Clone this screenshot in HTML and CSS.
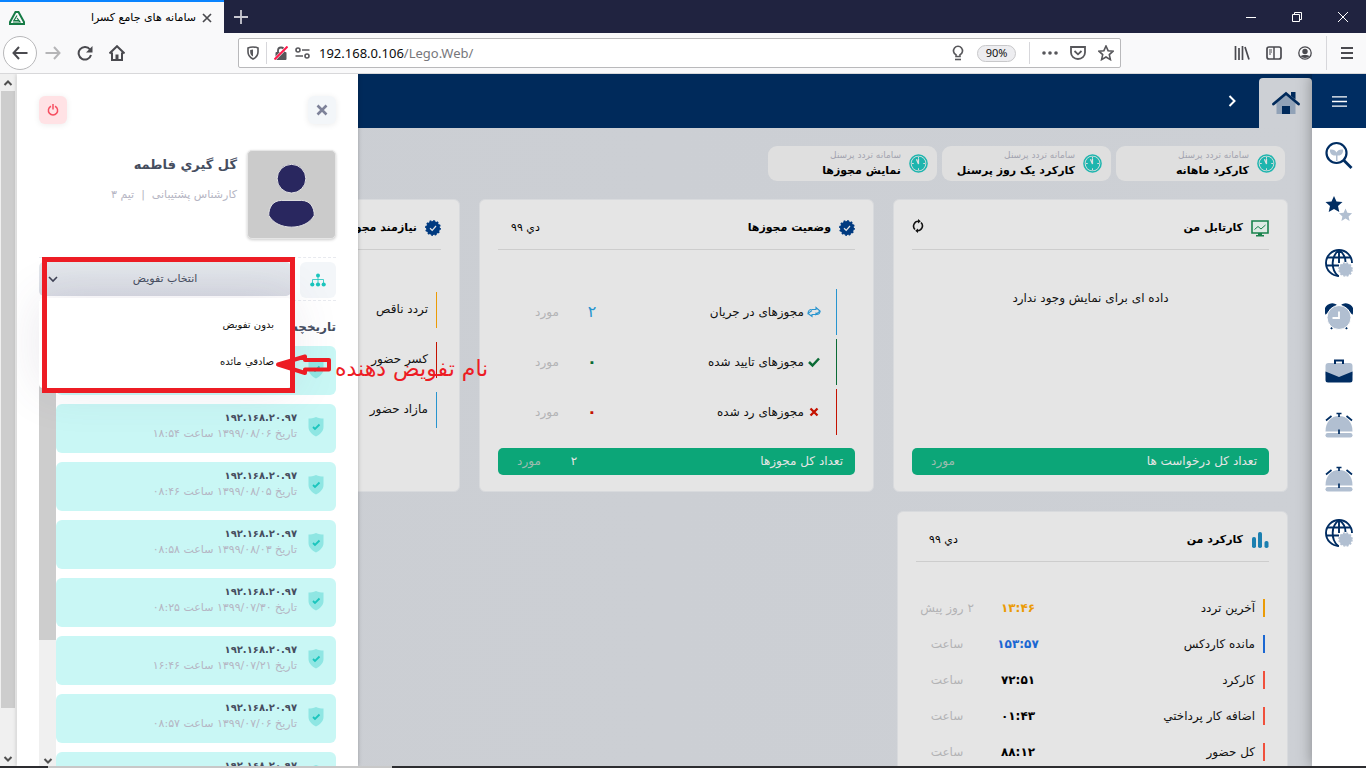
FILE: index.html
```html
<!DOCTYPE html>
<html lang="fa">
<head>
<meta charset="utf-8">
<title>سامانه های جامع کسرا</title>
<link rel="stylesheet" href="styles.css">
</head>
<body>
<svg class="defs" aria-hidden="true">
  <symbol id="clock" viewBox="0 0 20 20"><circle cx="10" cy="10" r="9" fill="none" stroke="#1db5ae" stroke-width="1.6"/><circle cx="10" cy="10" r="7.300" fill="#1db5ae"/><path d="M10 3v2M10 15v2M3 10h2M15 10h2" stroke="#dfdfdf" stroke-width="1"/><path d="M7.8 5.5 10 10.5V5.2" fill="none" stroke="#dfdfdf" stroke-width="1.3"/></symbol>
  <symbol id="badge" viewBox="0 0 16 16"><circle cx="8" cy="8" r="7" fill="#003a80" /><circle cx="8" cy="8" r="7" fill="none" stroke="#003a80" stroke-width="1.8" stroke-dasharray="1.83 1.83"/><path d="m5 8.3 2.2 2L11 6" fill="none" stroke="#e5e5e5" stroke-width="1.2"/></symbol>
  <symbol id="shield" viewBox="0 0 16 20"><path d="M8 0C5.500 1.200 2.500 1.600.5 1.600V10c0 4.500 4 7.800 7.500 9.500 3.500-1.700 7.500-5 7.500-9.500V1.600C13.500 1.600 10.500 1.200 8 0z" fill="#8fe6e3"/><path d="m5 10 2 2 4.500-4.500" fill="none" stroke="#1bc5bd" stroke-width="1.800"/></symbol>
  <symbol id="globe" viewBox="0 0 28 28"><g fill="none" stroke="#002d62" stroke-width="1.900"><path d="M14 27A13 13 0 1 1 27 14"/><path d="M14 1v13M14 1C6 7 5.500 20 13 27M14 1c4.500 3 6.500 7 6.500 12M2.500 8.500h23M1 16.500h13"/></g><circle cx="20.500" cy="20.500" r="6.300" fill="#b1bfd1"/><circle cx="20.500" cy="20.500" r="6.500" fill="none" stroke="#b1bfd1" stroke-width="1.500" stroke-dasharray="2 1.400"/></symbol>
  <symbol id="bell" viewBox="0 0 28 28"><path d="M.5 20.500C.5 11 6 5 14 5s13.500 6 13.500 15.500z" fill="#b1bfd1"/><rect x=".5" y="22" width="27" height="4.500" rx="2.200" fill="#b1bfd1"/><path d="M11.500 2.500h5M14 3v3M14 18.500v4.500M1 9.500 6.500 5M27 9.500 21.500 5" stroke="#002d62" stroke-width="1.700"/></symbol>
  <symbol id="up" viewBox="0 0 10 10"><path d="m1.500 7 3.500-3.500L8.500 7" fill="none" stroke="#505050" stroke-width="2"/></symbol>
  <symbol id="down" viewBox="0 0 10 10"><path d="M1.500 3 5 6.500 8.500 3" fill="none" stroke="#505050" stroke-width="2"/></symbol>
</svg>

<header class="browser">
  <div class="tabs">
    <div class="tab">
      <svg width="16" height="14" viewBox="0 0 16 14"><path d="M6.500 1h3L15 11v2H1v-2z" fill="none" stroke="#167b45" stroke-width="2"/><path d="M8 4.500 5 9.500h5.500M8 7l3 4H4" fill="none" stroke="#167b45" stroke-width="1.200"/></svg>
      <span class="tab-title" dir="rtl">سامانه های جامع کسرا</span>
      <button class="plain" aria-label="Close tab"><svg width="10" height="10" viewBox="0 0 10 10"><path d="m1 1 8 8M9 1 1 9" stroke="#4a4a4f" stroke-width="1.700"/></svg></button>
    </div>
    <button class="plain newtab" aria-label="New tab"><svg width="14" height="14" viewBox="0 0 14 14"><path d="M7 0v14M0 7h14" stroke="#c9c9d2" stroke-width="1.800"/></svg></button>
    <div class="window-buttons">
      <button class="plain" aria-label="Minimize"><svg width="10" height="10" viewBox="0 0 10 10"><path d="M0 5.500h10" stroke="#fff"/></svg></button>
      <button class="plain" aria-label="Restore"><svg width="10" height="10" viewBox="0 0 10 10"><path d="M.5 2.500h7v7h-7zM2.500 2V.5h7v7H8" fill="none" stroke="#fff"/></svg></button>
      <button class="plain" aria-label="Close"><svg width="10" height="10" viewBox="0 0 10 10"><path d="m0 0 10 10M10 0 0 10" stroke="#fff"/></svg></button>
    </div>
  </div>
  <div class="toolbar">
    <nav class="nav-buttons">
      <button class="plain back" aria-label="Back"><svg width="16" height="14" viewBox="0 0 16 14"><path d="M15.500 7H1.500M7 1 1.500 7 7 13" fill="none" stroke="#4a4a4f" stroke-width="2"/></svg></button>
      <button class="plain" aria-label="Forward"><svg width="16" height="14" viewBox="0 0 16 14"><path d="M.5 7h14M9 1l5.500 6L9 13" fill="none" stroke="#b5b5b7" stroke-width="2"/></svg></button>
      <button class="plain" aria-label="Reload"><svg width="16" height="16" viewBox="0 0 16 16"><path d="M13 4.500A6.300 6.300 0 1 0 14 10" fill="none" stroke="#4a4a4f" stroke-width="2"/><path d="M15.500 1v6.500H9z" fill="#4a4a4f"/></svg></button>
      <button class="plain" aria-label="Home"><svg width="16" height="16" viewBox="0 0 16 16"><path d="M0.500 8.500 8 1.200l7.500 7.300M3 7.500V15h10V7.500" fill="none" stroke="#4a4a4f" stroke-width="2"/><path d="M6.500 15V9.500h3V15z" fill="#4a4a4f"/></svg></button>
    </nav>
    <div class="urlbar">
      <svg width="12" height="14" viewBox="0 0 12 14"><path d="M6 1c2 0 3.500.3 5 1v4c0 3.500-2 5.500-5 7-3-1.500-5-3.500-5-7V2c1.500-.7 3-1 5-1z" fill="none" stroke="#57575b" stroke-width="1.600"/><path d="M6 3.500c-1 0-2 .2-2.800.5v2c0 2.200 1 3.500 2.800 4.500z" fill="#57575b"/></svg>
      <span class="rule"></span>
      <svg width="14" height="14" viewBox="0 0 14 14"><path d="M4 6V4.500a3 3 0 0 1 6 0V6" fill="none" stroke="#57575b" stroke-width="1.800"/><rect x="1.500" y="6" width="11" height="8" rx="1" fill="#57575b"/><path d="M.5 13.500 13.500.5" stroke="#fff" stroke-width="3"/><path d="M.5 13.500 13.500.5" stroke="#ff1a4b" stroke-width="2"/></svg>
      <svg width="15" height="12" viewBox="0 0 15 12"><g fill="none" stroke="#57575b" stroke-width="1.600"><circle cx="3" cy="3" r="2"/><circle cx="12" cy="9" r="2"/><path d="M7 3h7.500M.5 9H8"/></g></svg>
      <input class="url" aria-label="Address" value="192.168.0.106/Lego.Web/">
      <span class="url-face" aria-hidden="true"><b>192.168.0.106</b>/Lego.Web/</span>
      <svg width="12" height="16" viewBox="0 0 12 16"><path d="M4 11.500V9.800A4.500 4.500 0 1 1 8 9.800v1.700z" fill="none" stroke="#57575b" stroke-width="1.600"/><path d="M3 14.500h6" stroke="#57575b" stroke-width="1.600"/></svg>
      <button class="zoom">90%</button>
      <span class="rule"></span>
      <svg width="16" height="4" viewBox="0 0 16 4" fill="#57575b"><circle cx="2" cy="2" r="1.800"/><circle cx="8" cy="2" r="1.800"/><circle cx="14" cy="2" r="1.800"/></svg>
      <svg width="16" height="14" viewBox="0 0 16 14"><path d="M1 1h14v5.500a7 6.500 0 0 1-14 0z" fill="none" stroke="#57575b" stroke-width="1.800"/><path d="m4.500 5 3.500 3.300L11.500 5" fill="none" stroke="#57575b" stroke-width="1.800"/></svg>
      <svg width="16" height="16" viewBox="0 0 16 16"><path d="m8 1 2.100 4.700 5 .5-3.800 3.400 1.100 5L8 12l-4.400 2.600 1.100-5L.9 6.200l5-.5z" fill="none" stroke="#57575b" stroke-width="1.600"/></svg>
    </div>
    <div class="tools">
      <svg width="16" height="14" viewBox="0 0 16 14"><path d="M1.500 0v14M5 2v12M8.500 0v14M11 1l4 12.500" stroke="#4a4a4f" stroke-width="1.700"/></svg>
      <svg width="16" height="14" viewBox="0 0 16 14"><rect x="1" y="1" width="14" height="12" rx="2" fill="none" stroke="#4a4a4f" stroke-width="1.700"/><path d="M8 1v12" stroke="#4a4a4f" stroke-width="1.500"/><path d="M3 4h3M3 6h3M3 8h2" stroke="#4a4a4f"/></svg>
      <svg width="14" height="14" viewBox="0 0 14 14"><circle cx="7" cy="7" r="6.200" fill="none" stroke="#4a4a4f" stroke-width="1.300"/><circle cx="7" cy="5.500" r="2.700" fill="#4a4a4f"/><path d="M2.500 10c1.500-1.500 7.500-1.500 9 0-1.500 2.500-7.500 2.500-9 0z" fill="#4a4a4f"/></svg>
      <span class="rule"></span>
      <svg width="12" height="12" viewBox="0 0 12 12"><path d="M0 1h12M0 6h12M0 11h12" stroke="#4a4a4f" stroke-width="2"/></svg>
    </div>
  </div>
</header>

<div class="page">
  <div class="scrollbar">
    <svg width="10" height="10"><use href="#up"/></svg>
    <div class="thumb"></div>
    <svg width="10" height="10"><use href="#down"/></svg>
  </div>

  <div class="main" dir="rtl">
    <div class="topbar">
      <a class="home" href="#" aria-label="خانه"><svg width="28" height="24" viewBox="0 0 28 24"><path d="M4.500 12 14 4l9.500 8v11h-19z" fill="#91a2b7"/><path d="M10 15h8v8h-8z" fill="#002a5b"/><path d="M1.500 13 14 2.500 26.500 13" fill="none" stroke="#002a5b" stroke-width="2.800" stroke-linecap="round"/><path d="M19 1h4.500v7.500L19 5z" fill="#002a5b"/></svg></a>
      <button class="plain" aria-label="بعدی"><svg width="8" height="12" viewBox="0 0 8 12"><path d="m1.500 1 5 5-5 5" fill="none" stroke="#fff" stroke-width="2"/></svg></button>
    </div>
    <div class="content">
      <div class="shortcuts">
        <a class="shortcut" href="#"><svg width="19" height="19"><use href="#clock"/></svg><span><small>سامانه تردد پرسنل</small><b>کارکرد ماهانه</b></span></a>
        <a class="shortcut" href="#"><svg width="19" height="19"><use href="#clock"/></svg><span><small>سامانه تردد پرسنل</small><b>کارکرد یک روز پرسنل</b></span></a>
        <a class="shortcut" href="#"><svg width="19" height="19"><use href="#clock"/></svg><span><small>سامانه تردد پرسنل</small><b>نمایش مجوزها</b></span></a>
      </div>
      <div class="cards">
        <section class="card">
          <header class="card-head">
            <svg width="18" height="18" viewBox="0 0 18 18"><path d="M1 2h16v12H1z" fill="#dfeae4" stroke="#19834c" stroke-width="1.600"/><path d="M7 14h4v2h2v1.500H5V16h2z" fill="#19834c"/><path d="m3.500 10.500 3.500-3 3 2.500 4.500-4" fill="none" stroke="#19834c"/></svg>
            <h2>کارتابل من</h2>
            <button class="plain refresh" aria-label="بازخوانی"><svg width="12" height="14" viewBox="0 0 12 14"><path d="M3 10.500A4.800 4.800 0 0 1 6.500 2.300M9 3.500a4.800 4.800 0 0 1-3.500 8.200" fill="none" stroke="#111" stroke-width="1.600"/><path d="M6 0v4.600l2.800-2.300zM6 9.400V14l-2.800-2.300z" fill="#111"/></svg></button>
          </header>
          <p class="empty">داده ای برای نمایش وجود ندارد</p>
          <footer class="total"><span>تعداد کل درخواست ها</span><span></span><span class="unit">مورد</span></footer>
        </section>

        <section class="card">
          <header class="card-head"><svg width="16" height="16"><use href="#badge"/></svg><h2>وضعیت مجوزها</h2><span class="date">دي ۹۹</span></header>
          <ul class="status">
            <li class="sky"><svg width="14" height="12" viewBox="0 0 14 12"><path d="M4.500 3.500H9v-2L13 5 9 8.500v-2" fill="none" stroke="#2794cf" stroke-width="1.100"/><path d="M4.500 3.500C2.500 3.500 1 5 1 7.500l4-3M9.500 8.500H5v2L1 7.500M9.500 8.500C11.500 8.500 13 7 13 5" fill="none" stroke="#2794cf" stroke-width="1.100"/></svg><span>مجوزهای در جریان</span><b class="big">۲</b><span class="unit">مورد</span></li>
            <li class="green"><svg width="14" height="12" viewBox="0 0 14 12"><path d="m2 6 3.500 3.500L12 2.500" fill="none" stroke="#0b6b35" stroke-width="2.500"/></svg><span>مجوزهای تایید شده</span><b>۰</b><span class="unit">مورد</span></li>
            <li class="red"><svg width="14" height="12" viewBox="0 0 14 12"><path d="m3.500 2.500 7 7M10.500 2.500l-7 7" stroke="#c41200" stroke-width="2.300"/></svg><span>مجوزهای رد شده</span><b>۰</b><span class="unit">مورد</span></li>
          </ul>
          <footer class="total"><span>تعداد کل مجوزها</span><span>۲</span><span class="unit">مورد</span></footer>
        </section>

        <section class="card">
          <header class="card-head"><svg width="16" height="16"><use href="#badge"/></svg><h2>نیازمند مجوزها</h2></header>
          <ul class="needs">
            <li class="amber">تردد ناقص</li>
            <li class="red">کسر حضور</li>
            <li class="sky">مازاد حضور</li>
          </ul>
        </section>

        <section class="card work-card">
          <header class="card-head">
            <svg width="18" height="16" viewBox="0 0 18 16" fill="#1b7fb0"><rect x="1" y="5" width="4" height="11" rx="1.800"/><rect x="7" y="0" width="4" height="16" rx="1.800"/><rect x="13.500" y="9" width="4" height="7" rx="1.800"/></svg>
            <h2>کارکرد من</h2><span class="date">دي ۹۹</span>
          </header>
          <ul class="work">
            <li class="amber"><span>آخرین تردد</span><b>۱۳:۴۶</b><span class="unit">۲ روز پیش</span></li>
            <li class="blue"><span>مانده کاردکس</span><b>۱۵۳:۵۷</b><span class="unit">ساعت</span></li>
            <li><span>کارکرد</span><b>۷۲:۵۱</b><span class="unit">ساعت</span></li>
            <li><span>اضافه کار پرداختي</span><b>۰۱:۴۳</b><span class="unit">ساعت</span></li>
            <li><span>کل حضور</span><b>۸۸:۱۲</b><span class="unit">ساعت</span></li>
          </ul>
        </section>
      </div>
    </div>
  </div>

  <nav class="side">
    <button class="plain menu" aria-label="منو"><svg width="15" height="11" viewBox="0 0 15 11"><path d="M0 .8h15M0 5.500h15M0 10.200h15" stroke="#fff" stroke-width="1.300"/></svg></button>
    <a href="#" aria-label="جستجو"><svg width="28" height="28" viewBox="0 0 28 28"><circle cx="11.500" cy="12" r="10" fill="none" stroke="#002d62" stroke-width="2.200"/><path d="m18.500 19 8 8" stroke="#002d62" stroke-width="2.800"/><path d="M11 20v-5.500C6.500 15 4.500 12 5 8.500c3-.5 5.500.5 6.500 3 1-2.500 3.500-3.500 6.500-3 .5 3.500-1.500 6.500-5.500 6V20z" fill="#b1bfd1"/></svg></a>
    <a href="#" aria-label="علاقه مندی"><svg width="28" height="28" viewBox="0 0 28 28"><path d="m9 1 2.500 5.500 6 .6-4.500 4 1.300 6L9 14l-5.300 3 1.300-6-4.500-4 6-.6z" fill="#002d62"/><path d="m20.500 13.500 1.900 4.300 4.700.4-3.500 3.200 1 4.600-4.100-2.400-4.100 2.400 1-4.600-3.500-3.200 4.700-.4z" fill="#b1bfd1"/></svg></a>
    <a href="#" aria-label="وب"><svg width="28" height="28"><use href="#globe"/></svg></a>
    <a href="#" aria-label="ساعت"><svg width="28" height="28" viewBox="0 0 28 28"><path d="M1 10C-1 3 6 0 10 2zM27 10c2-7-5-10-9-8zM6 26l3-4M22 26l-3-4" fill="#002d62" stroke="#002d62" stroke-width="2"/><circle cx="14" cy="14.500" r="12" fill="#b1bfd1" stroke="#fff"/><path d="M14 8.500V15H7.500" fill="none" stroke="#fff" stroke-width="1.800"/></svg></a>
    <a href="#" aria-label="کیف"><svg width="28" height="28" viewBox="0 0 28 28"><rect x=".5" y="6" width="27" height="14" rx="3" fill="#b1bfd1"/><path d="M.5 14.500 14 20l13.500-5.500V23a2.500 2.500 0 0 1-2.500 2.500H3A2.500 2.500 0 0 1 .5 23z" fill="#002d62"/><path d="M10 7V3.500h8V7" fill="none" stroke="#002d62" stroke-width="2"/></svg></a>
    <a href="#" aria-label="زنگ"><svg width="28" height="28"><use href="#bell"/></svg></a>
    <a href="#" aria-label="زنگ دوم"><svg width="28" height="28"><use href="#bell"/></svg></a>
    <a href="#" aria-label="شبکه"><svg width="28" height="28"><use href="#globe"/></svg></a>
  </nav>

  <aside class="drawer" dir="rtl">
    <div class="drawer-top">
      <button class="close" aria-label="بستن"><svg width="12" height="12" viewBox="0 0 12 12"><path d="m1.500 1.500 9 9M10.500 1.500l-9 9" stroke="#7e8299" stroke-width="2.600"/></svg></button>
      <button class="power" aria-label="خروج"><svg width="12" height="12" viewBox="0 0 12 12"><path d="M4 2.200a4.600 4.600 0 1 0 4 0" fill="none" stroke="#f64e60" stroke-width="1.500"/><path d="M6 0v5.500" stroke="#f64e60" stroke-width="1.500"/></svg></button>
    </div>
    <div class="profile">
      <svg class="avatar" viewBox="0 0 88 88"><circle cx="44" cy="28" r="14.500" fill="#29275f" stroke="#e5e5e5"/><path d="M34 50h20c9 0 13 7 13 15-8 16-38 16-46 0 0-8 4-15 13-15z" fill="#29275f" stroke="#e5e5e5"/></svg>
      <div><h1>گل گيري فاطمه</h1><p>کارشناس پشتیبانی &nbsp;|&nbsp; تیم ۳</p></div>
    </div>
    <div class="delegate">
      <span class="org"><svg width="16" height="14" viewBox="0 0 16 14"><g fill="#1bc5bd"><circle cx="8" cy="2.500" r="2"/><circle cx="2.300" cy="11.500" r="2.100"/><circle cx="8" cy="11.500" r="2.100"/><circle cx="13.700" cy="11.500" r="2.100"/></g><path d="M8 3v8M2.500 11V6.500h11V11" fill="none" stroke="#1bc5bd" stroke-width=".8"/></svg></span>
      <div class="picker">
        <select aria-label="انتخاب تفویض"><option>انتخاب تفویض</option><option>بدون تفویض</option><option>صادقي مائده</option></select>
        <svg class="chevron" width="10" height="10" viewBox="0 0 10 10"><path d="M1 3l4 4 4-4" fill="none" stroke="#3f4254" stroke-width="1.600"/></svg>
        <div class="menu-list"><button>بدون تفویض</button><button>صادقي مائده</button></div>
      </div>
    </div>
    <h2 class="history-title">تاریخچه</h2>
    <div class="history">
      <ul>
        <li><svg width="16" height="20"><use href="#shield"/></svg></li>
        <li><svg width="16" height="20"><use href="#shield"/></svg><span><b>۱۹۲.۱۶۸.۲۰.۹۷</b><small>تاریخ ۱۳۹۹/۰۸/۰۶ ساعت ۱۸:۵۴</small></span></li>
        <li><svg width="16" height="20"><use href="#shield"/></svg><span><b>۱۹۲.۱۶۸.۲۰.۹۷</b><small>تاریخ ۱۳۹۹/۰۸/۰۵ ساعت ۰۸:۴۶</small></span></li>
        <li><svg width="16" height="20"><use href="#shield"/></svg><span><b>۱۹۲.۱۶۸.۲۰.۹۷</b><small>تاریخ ۱۳۹۹/۰۸/۰۳ ساعت ۰۸:۵۸</small></span></li>
        <li><svg width="16" height="20"><use href="#shield"/></svg><span><b>۱۹۲.۱۶۸.۲۰.۹۷</b><small>تاریخ ۱۳۹۹/۰۷/۳۰ ساعت ۰۸:۲۵</small></span></li>
        <li><svg width="16" height="20"><use href="#shield"/></svg><span><b>۱۹۲.۱۶۸.۲۰.۹۷</b><small>تاریخ ۱۳۹۹/۰۷/۲۱ ساعت ۱۶:۴۶</small></span></li>
        <li><svg width="16" height="20"><use href="#shield"/></svg><span><b>۱۹۲.۱۶۸.۲۰.۹۷</b><small>تاریخ ۱۳۹۹/۰۷/۰۶ ساعت ۰۸:۵۷</small></span></li>
        <li><svg width="16" height="20"><use href="#shield"/></svg><span><b>۱۹۲.۱۶۸.۲۰.۹۷</b></span></li>
      </ul>
      <div class="inner-scroll"><div class="inner-thumb"></div><svg width="10" height="10"><use href="#down"/></svg></div>
    </div>
  </aside>

  <div class="mark-box"></div>
  <div class="mark-label" dir="rtl"><span>نام تفویض دهنده</span></div>
  <svg class="mark-arrow" width="58" height="26" viewBox="0 0 58 26"><path d="m3 12.500 27-8V8h24v9.500H30V21z" fill="none" stroke="#ed1c24" stroke-width="4" stroke-linejoin="round"/><path d="M3 12.500 20 7v3.500l-3 2 3 2V18z" fill="#ed1c24"/></svg>
</div>
<footer class="taskbar"><span></span></footer>
</body>
</html>
```

FILE: styles.css
```css
* { box-sizing: border-box; }
body {
  margin: 0;
  height: 100vh;
  display: flex;
  flex-direction: column;
  overflow: hidden;
  font: 12px/18px "DejaVu Sans", sans-serif;
  color: #111;
}
h1, h2, p, ul { margin: 0; padding: 0; list-style: none; }
a { color: inherit; text-decoration: none; }
svg { display: block; flex: none; }
button, select, input { font: inherit; color: inherit; }
.defs { position: absolute; width: 0; height: 0; }
.plain { border: 0; padding: 0; background: none; display: flex; align-items: center; justify-content: center; }

/* browser frame */
.browser { flex: none; background: #f9f9fa; border-bottom: 1px solid #d8d8da; }
.tabs { display: flex; height: 33px; background: #202340; }
.tab { width: 224px; display: flex; align-items: center; gap: 6px; padding: 0 12px 0 9px; background: #f9f9fa; border-top: 2px solid #0a84ff; }
.tab-title { flex: 1; font-size: 11px; color: #000; }
.newtab { width: 34px; }
.window-buttons { display: flex; margin-left: auto; }
.window-buttons button { width: 46px; }
.toolbar { display: flex; align-items: center; height: 40px; padding: 0 13px 0 3px; }
.nav-buttons { display: flex; align-items: center; width: 235px; gap: 16px; }
.nav-buttons .back { width: 34px; height: 34px; margin-right: -8px; border: 1px solid #b8b8ba; border-radius: 50%; background: #fff; }
.urlbar { flex: 1; position: relative; display: flex; align-items: center; gap: 7px; height: 30px; padding: 0 6px 0 8px; background: #fff; border: 1px solid #b9b9bb; border-radius: 2px; font: 13px/20px "Noto Sans", sans-serif; }
.rule { width: 1px; height: 22px; background: #d7d7db; }
.url { flex: 1; min-width: 0; border: 0; padding: 0; background: none; color: transparent; }
.url-face { position: absolute; left: 80px; color: #77777b; pointer-events: none; }
.url-face b { font-weight: 400; color: #0c0c0d; }
.zoom { width: 39px; height: 17px; margin: 0 6px; padding: 0; border: 1px solid #c8c8ca; border-radius: 9px; background: #ededf0; font-size: 11px; line-height: 14px; }
.urlbar .zoom ~ svg { margin-left: 5px; }
.tools { display: flex; align-items: center; gap: 16px; margin-left: 113px; }
.tools .rule { height: 34px; margin: 0 -2px; }

/* page frame */
.page { flex: 1; min-height: 0; position: relative; display: flex; overflow: hidden; }
.scrollbar { flex: none; width: 17px; display: flex; flex-direction: column; align-items: center; background: #f0f0f0; padding: 4px 1px 2px; border-right: 1px solid #f8f8f8; }
.thumb { flex: none; width: 100%; height: 90%; margin-top: 3px; margin-bottom: auto; background: #cdcdcd; }
.main { flex: 1; min-width: 0; background: linear-gradient(90deg, #cbced3, #cdd0d5); overflow: hidden; }
.topbar { display: flex; align-items: flex-end; height: 54px; background: #002a5b; }
.topbar .plain { width: 54px; height: 54px; }
.home { width: 53px; height: 50px; display: flex; align-items: center; justify-content: center; background: #cdd0d5; border-radius: 4px 4px 0 0; }
.content { padding: 18px 24px 0 48px; }
.shortcuts { display: flex; gap: 5px; margin: 0 3px 18px; }
.shortcut { display: flex; align-items: center; gap: 8px; width: 169px; height: 35px; padding: 0 9px; border-radius: 9px; background: #dfdfdf; color: #000; }
.shortcut span { display: flex; flex-direction: column; white-space: nowrap; }
.shortcut small { font-size: 9px; line-height: 14px; color: #a3a4af; }
.shortcut b { font-size: 11px; line-height: 17px; }
.cards { display: grid; grid-template-columns: repeat(3, 1fr); gap: 19px; }
.card { height: 293px; display: flex; flex-direction: column; padding: 0 18px 16px; border: 1px solid #d8dadd; border-radius: 6px; background: #e5e5e5; }
.card-head { flex: none; display: flex; align-items: center; gap: 8px; height: 50px; padding-top: 7px; border-bottom: 1px solid #cdcdcd; }
.card-head h2 { font-size: 11px; color: #000; }
.date, .refresh { margin-right: auto; }
.date { margin-left: 13px; font-size: 11px; color: #000; }
.refresh svg { margin: -4px 0 0; }
.empty { flex: 1; padding-top: 39px; text-align: center; }
.unit { color: #b3b3b5; text-align: center; }
.total { display: grid; grid-template-columns: 1fr 28px 62px; align-items: center; height: 27px; padding: 0 12px 2px 0; border-radius: 5px; background: #0ca678; color: #e5e5e5; margin-top: auto; }
.total span:nth-child(2) { text-align: center; }
.total .unit { color: #9dbcb0; }
.status { padding-top: 39px; }
.status li { display: grid; grid-template-columns: 14px 1fr 22px 62px; gap: 0 3px; align-items: center; height: 46px; margin: 0 18px 4px; padding-right: 15px; border-right: 1px solid #2794cf; }
.status b { text-align: center; font-size: 16px; }
.status .big { font-weight: 400; }
.needs { padding-top: 42px; }
.needs li { height: 36px; margin: 0 4px 14px; padding-right: 8px; border-right: 1px solid #2794cf; line-height: 34px; }
.work-card { margin-left: 4px; height: 300px; }
.work { padding-top: 28px; }
.work li { display: grid; grid-template-columns: 1fr 80px 62px; align-items: center; height: 36px; margin-right: 4px; }
.work li span:first-child { border-right: 2px solid #f0503c; padding-right: 8px; }
.work b { text-align: center; color: #000; }
.sky b { color: #2794cf; }
.green b { color: #0b6b35; }
.red b { color: #c41200; }
.status .green { border-color: #0b6b35; }
.status .red, .needs .red { border-color: #c41200; }
.needs .amber { border-color: #eb9b06; }
.work .amber span:first-child { border-color: #eb9b06; }
.work .amber b { color: #eb9b06; }
.work .blue span:first-child { border-color: #1b67d2; }
.work .blue b { color: #1b67d2; }

/* right rail */
.side { flex: none; position: relative; width: 54px; background: #fff; box-shadow: 0 0 14px rgba(0, 0, 0, .35); }
.side > * { display: flex; align-items: center; justify-content: center; width: 54px; height: 54px; }
.side .menu { background: #002d62; }

/* user drawer */
.drawer { position: absolute; top: 0; bottom: 0; left: 17px; width: 341px; display: flex; flex-direction: column; padding: 22px 22px 0; background: #fff; box-shadow: 0 0 4px rgba(0, 0, 0, .25); overflow: hidden; }
.drawer-top { display: flex; justify-content: space-between; }
.drawer-top button { display: flex; align-items: center; justify-content: center; width: 28px; height: 28px; padding: 0; border: 0; border-radius: 6px; box-shadow: 0 1px 6px rgba(0, 0, 0, .08); }
.drawer-top .close { background: #f3f6f9; }
.drawer-top .power { background: #ffe2e5; }
.profile { display: flex; gap: 10px; height: 90px; margin-top: 26px; }
.avatar { width: 89px; height: 89px; border: 1px solid #e6e6e6; border-radius: 5px; background: #cbcbcb; box-shadow: 0 1px 3px rgba(0, 0, 0, .2); }
.profile h1 { margin-top: 3px; font-size: 13px; line-height: 24px; color: #464e5f; }
.profile p { margin-top: 9px; color: #b5b5c3; font-size: 11px; }
.delegate { display: flex; gap: 9px; margin-top: 17px; padding: 4px 0 2px; border: 1px dashed #e8eaef; border-width: 1px 0; }
.org { display: flex; align-items: center; justify-content: center; width: 36px; height: 36px; border-radius: 6px; background: #f3f6f9; }
.picker { flex: 1; position: relative; }
.picker select { display: block; width: 100%; height: 34px; padding: 0; border: 0; border-radius: 5px; appearance: none; text-align-last: center; background: linear-gradient(#e4e8ec, #d9dce4); color: #464e5f; font-size: 11px; }
.chevron { position: absolute; left: 9px; top: 12px; }
.menu-list { position: absolute; z-index: 2; top: 36px; left: 0; right: 0; padding: 8px 0; border-radius: 4px; background: #fff; box-shadow: 0 0 50px rgba(82, 63, 105, .12); }
.menu-list button { display: block; width: 100%; height: 37px; padding: 0 17px; border: 0; background: none; text-align: right; font-size: 10px; color: #111; }
.history-title { margin: 16px 0 9px; font-size: 12px; line-height: 20px; color: #464e5f; }
.history { flex: 1; min-height: 0; display: flex; overflow: hidden; }
.history ul { flex: 1; }
.history li { display: flex; gap: 11px; height: 49px; margin-bottom: 9px; padding: 6px 12px 0 0; border-radius: 6px; background: #c9f7f5; }
.history li svg { margin-top: 7px; }
.history span { display: flex; flex-direction: column; }
.history b { font-size: 10px; line-height: 16px; color: #464e5f; }
.history small { font-size: 11px; line-height: 16px; color: #b5b5c3; }
.inner-scroll { width: 17px; display: flex; flex-direction: column; align-items: center; justify-content: space-between; background: #f0f0f0; overflow: hidden; }
.inner-thumb { width: 100%; height: 70%; background: #cdcdcd; }

/* annotation */
.mark-box { position: absolute; z-index: 3; left: 42px; top: 183px; width: 253px; height: 136px; border: 5px solid #ed1c24; }
.mark-arrow { position: absolute; z-index: 3; left: 275px; top: 278px; }
.mark-label { position: absolute; z-index: 3; left: 335px; top: 280px; font-size: 22px; line-height: 30px; color: #ed1c24; white-space: nowrap; }

.taskbar { flex: none; height: 2px; padding-left: 48px; background: #2d2d30; }
.taskbar span { display: block; width: 344px; height: 2px; background: #c8c8c8; }
```
